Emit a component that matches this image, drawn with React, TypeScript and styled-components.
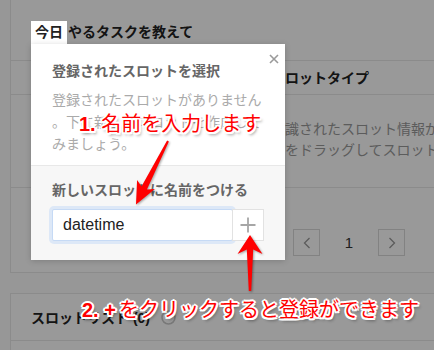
import styled, { createGlobalStyle } from "styled-components";

const GlobalStyle = createGlobalStyle`
  html, body {
    margin: 0;
    padding: 0;
    background: #fcfcfc;
  }
  body {
    font-family: "Liberation Sans", "Noto Sans CJK JP", sans-serif;
    color: #222;
  }
`;

const CloseIcon = () => (
  <svg width="10" height="10" viewBox="0 0 10 10">
    <path d="M1 1 L9 9 M9 1 L1 9" stroke="#9a9a9a" strokeWidth="1.6" fill="none" />
  </svg>
);

const PlusIcon = () => (
  <svg width="16" height="16" viewBox="0 0 16 16">
    <path d="M8 0.5 V15.5 M0.5 8 H15.5" stroke="#a6a6a6" strokeWidth="1.8" fill="none" />
  </svg>
);

const Chevron = ({ dir }: { dir: "left" | "right" }) => (
  <svg width="8" height="12" viewBox="0 0 8 12">
    <path
      d={dir === "left" ? "M6.5 1 L1.5 6 L6.5 11" : "M1.5 1 L6.5 6 L1.5 11"}
      stroke="#999"
      strokeWidth="1.3"
      fill="none"
    />
  </svg>
);

const HelpIcon = () => (
  <svg width="15" height="15" viewBox="0 0 15 15">
    <circle cx="7.5" cy="7.5" r="6.5" stroke="#c8c8c8" strokeWidth="1.6" fill="none" />
  </svg>
);

export default function App() {
  return (
    <Page>
      <GlobalStyle />
      <Card>
        <TitleRow>
          <Highlight>今日</Highlight>やるタスクを教えて
        </TitleRow>
        <GridRow $height={34}>
          <ColHead>タスク</ColHead>
          <ColHead>スロットタイプ</ColHead>
        </GridRow>
        <GridRow $height={93}>
          <div />
          <MutedText>
            認識されたスロット情報がありません
            <br />
            スをドラッグしてスロットを追加してください
          </MutedText>
        </GridRow>
        <GridRow $height={84} $last>
          <div />
          <Pager>
            <PageButton>
              <Chevron dir="left" />
            </PageButton>
            <PageNumber>1</PageNumber>
            <PageButton>
              <Chevron dir="right" />
            </PageButton>
          </Pager>
        </GridRow>
      </Card>

      <Card>
        <ListHead>
          スロットリスト (0)
          <HelpIcon />
        </ListHead>
        <ListBody />
      </Card>

      <Mask />

      <Popover>
        <CloseButton>
          <CloseIcon />
        </CloseButton>
        <PopoverTop>
          <PopoverTitle>登録されたスロットを選択</PopoverTitle>
          <EmptyText>
            登録されたスロットがありません。下に新しいスロットを作成してみましょう。
          </EmptyText>
        </PopoverTop>
        <PopoverBottom>
          <PopoverTitle>新しいスロットに名前をつける</PopoverTitle>
          <InputGroup>
            <NameInput defaultValue="datetime" />
            <AddButton>
              <PlusIcon />
            </AddButton>
          </InputGroup>
        </PopoverBottom>
      </Popover>

      <Arrows width="434" height="350" viewBox="0 0 434 350">
        <polygon points="167.1,140.5 168.9,141.5 146.9,189.4 154.9,188.9 136,204.5 137.1,179.9 141.5,186.6" fill="#f00" />
        <polygon points="250,235 262.5,254 253.2,249.5 251.2,291 248.8,291 246.8,249.5 237.5,254" fill="#f00" />
      </Arrows>

      <Note $left={79} $top={112}>
        <b>1.</b> 名前を入力します
      </Note>
      <Note $left={82} $top={298}>
        <b>2.</b> <Plus>+</Plus>をクリックすると登録ができます
      </Note>
    </Page>
  );
}

const Page = styled.div`
  position: relative;
  height: 350px;
  overflow: hidden;
  padding-left: 10px;
`;

const Card = styled.section`
  background: #fff;
  border: 1px solid #e8e8e8;
  border-top: none;
  border-right: none;
  margin-bottom: 20px;

  & + & {
    border-top: 1px solid #e8e8e8;
  }
`;

const TitleRow = styled.div`
  box-sizing: border-box;
  height: 61px;
  padding: 21px 0 0 20px;
  border-bottom: 1px solid #e8e8e8;
  font-size: 14px;
  font-weight: 700;
  line-height: 23px;
  color: #222;
`;

const Highlight = styled.span`
  position: relative;
  z-index: 1001;
  display: inline-block;
  padding: 0 4px;
  margin-right: 1px;
  background: #fff;
  color: #222;
`;

const GridRow = styled.div<{ $height: number; $last?: boolean }>`
  box-sizing: border-box;
  display: grid;
  grid-template-columns: 240px 1fr;
  height: ${({ $height }) => $height}px;
  padding-left: 20px;
  border-bottom: ${({ $last }) => ($last ? "none" : "1px solid #e8e8e8")};
`;

const ColHead = styled.div`
  align-self: center;
  font-size: 14px;
  font-weight: 700;
  line-height: 20px;
  color: #222;
  white-space: nowrap;
`;

const MutedText = styled.p`
  margin: 0;
  padding-top: 24px;
  font-size: 14px;
  line-height: 21px;
  color: #999;
  white-space: nowrap;
`;

const Pager = styled.div`
  display: flex;
  align-items: center;
  padding: 25px 0 0 22px;
`;

const PageButton = styled.div`
  box-sizing: border-box;
  width: 27px;
  height: 27px;
  display: flex;
  align-items: center;
  justify-content: center;
  border: 1px solid #d9d9d9;
`;

const PageNumber = styled.span`
  width: 58px;
  text-align: center;
  font-size: 15px;
  color: #333;
`;

const ListHead = styled.div`
  box-sizing: border-box;
  height: 47px;
  display: flex;
  align-items: center;
  gap: 11px;
  padding-left: 20px;
  border-bottom: 1px solid #e8e8e8;
  font-size: 14px;
  font-weight: 700;
  color: #222;
`;

const ListBody = styled.div`
  height: 60px;
`;

const Mask = styled.div`
  position: absolute;
  inset: 0;
  z-index: 1000;
  background: rgba(0, 0, 0, 0.4);
`;

const Popover = styled.div`
  position: absolute;
  left: 31px;
  top: 44px;
  z-index: 1002;
  width: 254px;
  background: #fff;
  box-shadow: 0 1px 6px rgba(0, 0, 0, 0.18);
`;

const CloseButton = styled.span`
  position: absolute;
  top: 10px;
  right: 6px;
  display: flex;
  width: 10px;
  height: 10px;
`;

const PopoverTop = styled.div`
  padding: 17px 21px 10px;
  border-bottom: 1px solid #e8e8e8;
`;

const PopoverTitle = styled.h4`
  margin: 0;
  font-size: 14px;
  font-weight: 700;
  line-height: 20px;
  color: #666;
  white-space: nowrap;
`;

const EmptyText = styled.p`
  margin: 8px 0 0;
  font-size: 14px;
  line-height: 22px;
  color: #aaa;
  line-break: anywhere;
`;

const PopoverBottom = styled.div`
  padding: 14px 21px 19px;
  background: #f7f7f7;
`;

const InputGroup = styled.div`
  display: flex;
  margin-top: 9px;
`;

const NameInput = styled.input`
  box-sizing: border-box;
  width: 181px;
  height: 32px;
  padding: 0 0 0 10px;
  border: 1px solid #c6daf5;
  border-radius: 2px;
  box-shadow: 0 0 0 3px #dde8f7;
  outline: none;
  background: #fff;
  font-family: "Liberation Sans", sans-serif;
  font-size: 16px;
  color: #222;
`;

const AddButton = styled.span`
  position: relative;
  box-sizing: border-box;
  width: 33px;
  height: 32px;
  margin-left: -1px;
  display: flex;
  align-items: center;
  justify-content: center;
  background: #fff;
  border: 1px solid #e2e2e2;
`;

const Arrows = styled.svg`
  position: absolute;
  left: 0;
  top: 0;
  z-index: 1003;
  pointer-events: none;
  filter: drop-shadow(1px 1px 1px rgba(0, 0, 0, 0.35));
`;

const Note = styled.div<{ $left: number; $top: number }>`
  position: absolute;
  left: ${({ $left }) => $left}px;
  top: ${({ $top }) => $top}px;
  z-index: 1004;
  font-size: 20px;
  line-height: 24px;
  color: #f00;
  white-space: nowrap;
  text-shadow:
    2px 0 #fff, -2px 0 #fff, 0 2px #fff, 0 -2px #fff,
    1.5px 1.5px #fff, -1.5px -1.5px #fff, 1.5px -1.5px #fff, -1.5px 1.5px #fff,
    2px 3px 3px rgba(0, 0, 0, 0.45);

  b {
    font-weight: 700;
  }
`;

const Plus = styled.b`
  margin-right: 3px;
`;
